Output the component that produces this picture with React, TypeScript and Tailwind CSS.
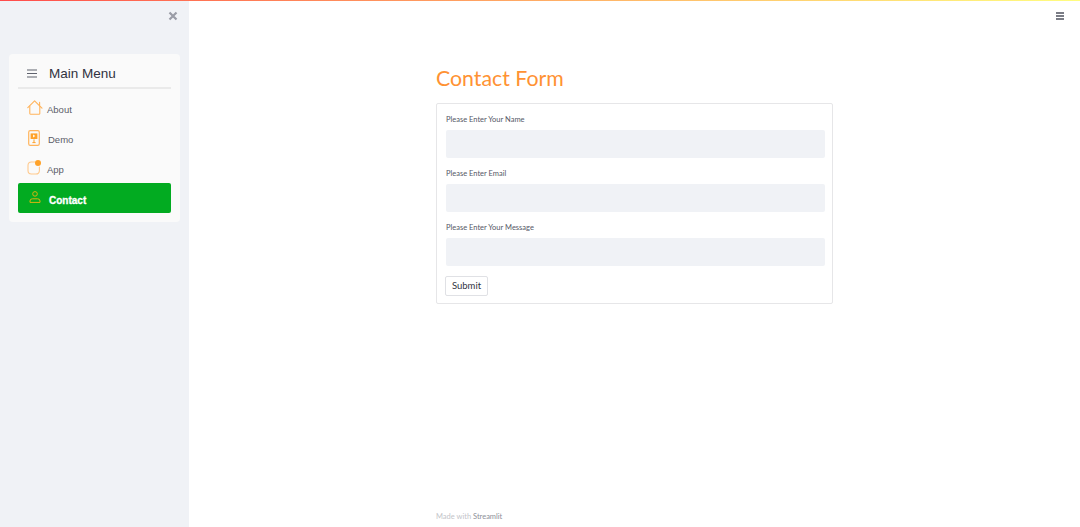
import React from 'react';

const MENU_FONT = 'font-["Liberation_Sans",Arial,sans-serif]';

const HouseIcon = () => (
  <svg width="16" height="15" viewBox="0 0 16 15" fill="none" stroke="#ffb45c" strokeWidth="1.1" strokeLinejoin="round" strokeLinecap="round">
    <path d="M0.8 7.6 L7.6 0.8 L12.6 5.8 L12.6 2.4 M12.6 5.8 L15 8.2" />
    <path d="M2.8 6 V13.6 Q2.8 14.2 3.4 14.2 H12 Q12.8 14.2 12.8 13.4 V6" />
  </svg>
);

const DemoIcon = () => (
  <svg width="12" height="16" viewBox="0 0 12 16" fill="none">
    <rect x="0.7" y="0.7" width="10.6" height="14.6" rx="1.6" stroke="#ffb45c" strokeWidth="1.2" />
    <rect x="2.6" y="3.4" width="6.8" height="5.6" fill="#ffa229" />
    <path d="M5 4.6 L7.4 6.1 L5 7.6 Z" fill="#fff6e8" />
    <path d="M6 9.4 V12.4 M4.4 12.6 H7.6" stroke="#ffa229" strokeWidth="1" />
  </svg>
);

const AppIcon = () => (
  <svg width="14" height="14" viewBox="0 0 14 14" fill="none">
    <path d="M8.2 1 H4.4 Q1 1 1 4.4 V9.6 Q1 13 4.4 13 H8.8 Q12.4 13 12.4 9.4 V6" stroke="#ffc98c" strokeWidth="1.1" strokeLinecap="round" />
  </svg>
);

const PersonIcon = () => (
  <svg className="mt-[-2px]" width="12" height="12" viewBox="0 0 12 12" fill="none" stroke="#d9b310" strokeWidth="1">
    <circle cx="6" cy="2.9" r="2.3" />
    <path d="M1 11.4 H11 V10 Q11 7.8 8.6 7.8 H3.4 Q1 7.8 1 10 Z" strokeLinejoin="round" />
  </svg>
);

const Field = ({ label }: { label: string }) => (
  <div className="flex flex-col">
    <label className="h-[12px] pt-px text-[7.5px] leading-[12px] text-[#545766]">{label}</label>
    <input className="mt-[5px] h-[28px] w-full rounded-[2px] bg-[#f0f2f6] outline-none" />
  </div>
);

export default function App() {
  return (
    <div className='relative flex h-[527px] w-[1080px] overflow-hidden bg-white font-["Lato","Open_Sans",sans-serif]'>
      <div className="absolute left-0 top-0 z-10 h-[1px] w-full bg-gradient-to-r from-[#ff4b4b] to-[#fffd80]" />

      <aside className="relative w-[189px] shrink-0 bg-[#f0f2f6] px-[9px] pt-[54px]">
        <button className="absolute left-[167px] top-[10px] text-[#9a9ca6]">
          <svg className="block" width="12" height="12" viewBox="0 0 12 12" stroke="currentColor" strokeWidth="2.2">
            <path d="M2.5 2.5 L9.5 9.5 M9.5 2.5 L2.5 9.5" />
          </svg>
        </button>

        <div className={`h-[168px] w-[171px] rounded-[4px] bg-[#fafafa] px-[9px] ${MENU_FONT}`}>
          <div className="flex h-[35px] items-center border-b-2 border-[#eaeaea] pt-[6px]">
            <svg className="ml-[9px]" width="10" height="9" viewBox="0 0 10 9" stroke="#5f626d" strokeWidth="1.1">
              <path d="M0 1 H10 M0 4.5 H10 M0 8 H10" />
            </svg>
            <span className="ml-[12px] text-[13.5px] leading-none text-[#31333f]">Main Menu</span>
          </div>
          <div className="flex h-[30px] items-center pl-[9px] pt-[7px]">
            <HouseIcon />
            <span className="ml-[4px] mt-[5px] text-[9.5px] text-[#5b5d68]">About</span>
          </div>
          <div className="flex h-[30px] items-center pl-[10px] pt-[8px]">
            <DemoIcon />
            <span className="ml-[8px] mt-[5px] text-[9.5px] text-[#5b5d68]">Demo</span>
          </div>
          <div className="flex h-[30px] items-center pl-[9px] pt-[7px]">
            <span className="relative flex h-[14px] w-[14px]">
              <AppIcon />
              <span className="absolute right-0 top-[-1px] h-[6px] w-[6px] rounded-full bg-[#ffa229]" />
            </span>
            <span className="ml-[6px] mt-[5px] text-[9.5px] text-[#5b5d68]">App</span>
          </div>
          <div className="mt-[4px] flex h-[30px] items-center rounded-[2px] bg-[#02ab21] pl-[11px]">
            <PersonIcon />
            <span className="ml-[8px] mt-[5px] text-[10px] font-bold text-white [-webkit-text-stroke:0.3px_white]">Contact</span>
          </div>
        </div>
      </aside>

      <main className="relative flex flex-1 flex-col pl-[247px]">
        <button className="absolute right-[16px] top-[12px]">
          <svg className="block" width="8" height="8" viewBox="0 0 8 8" stroke="#4f525d" strokeWidth="1.4">
            <path d="M0 1 H8 M0 4 H8 M0 7 H8" />
          </svg>
        </button>

        <h1 className="mt-[64px] h-[29px] text-[21.3px] leading-[29px] text-[#ff9233]">Contact Form</h1>

        <form className="mt-[10px] flex h-[201px] w-[397px] flex-col rounded-[2px] border border-[#e6e6e8] pl-[9px] pr-[7px] pt-[9px]">
          <div className="flex flex-col gap-[9px]">
            <Field label="Please Enter Your Name" />
            <Field label="Please Enter Email" />
            <Field label="Please Enter Your Message" />
          </div>
          <button
            type="button"
            className="ml-[-1px] mt-[10px] h-[20px] w-[43px] rounded-[2px] border border-[#e0e1e5] bg-white text-[9.5px] text-[#31333f]"
          >
            Submit
          </button>
        </form>

        <footer className="mt-auto pb-[5px] text-[7.5px] leading-[10px] text-[#c3c4c9]">
          Made with <span className="text-[#8e9099]">Streamlit</span>
        </footer>
      </main>
    </div>
  );
}
